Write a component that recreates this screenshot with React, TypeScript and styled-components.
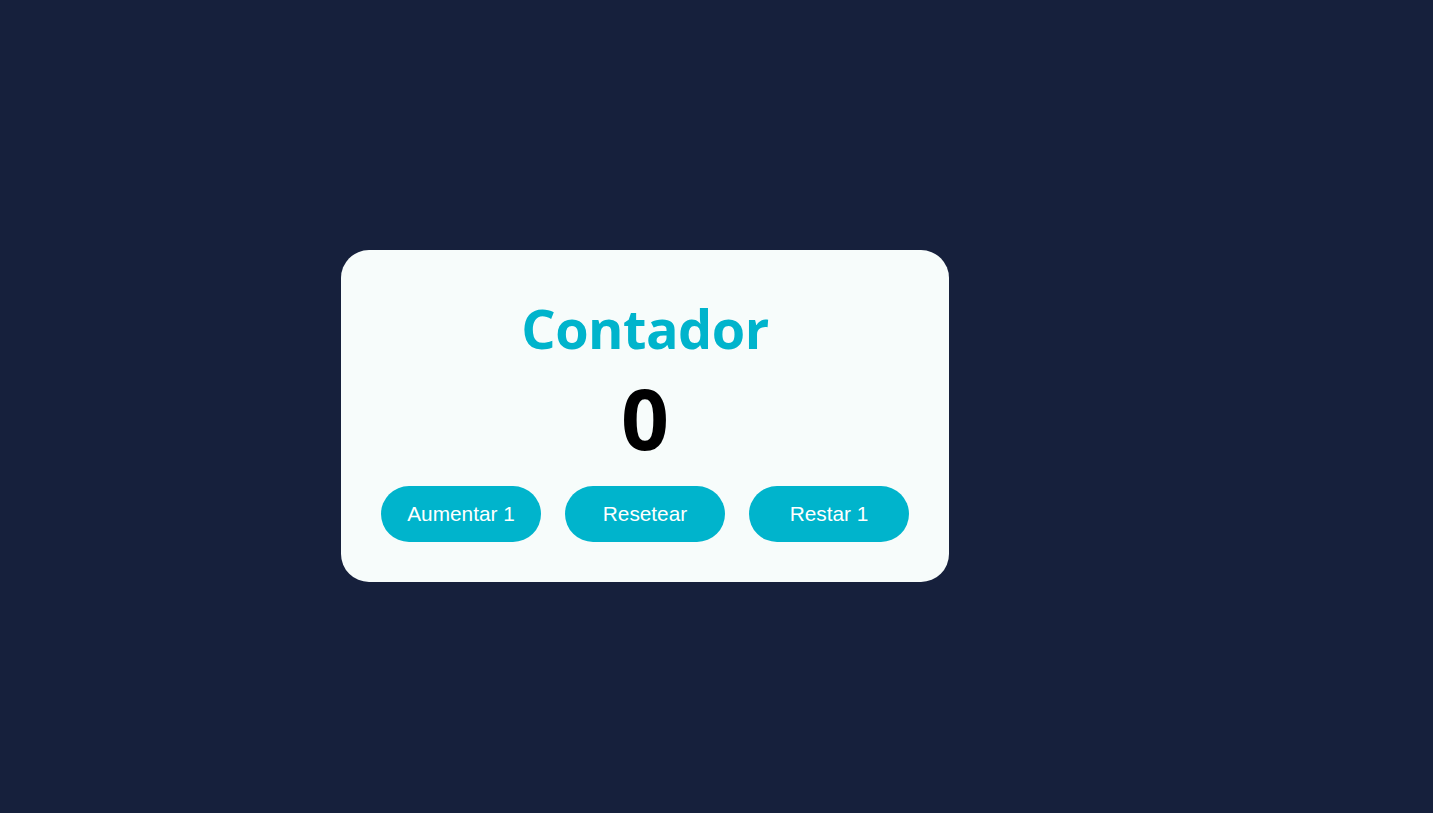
import React, { useState } from "react";
import styled, { createGlobalStyle } from "styled-components";

const GlobalStyle = createGlobalStyle`
  html, body {
    margin: 0;
    padding: 0;
    background: #16203c;
  }
  * { box-sizing: border-box; }
`;

const Page = styled.main`
  min-height: 813px;
  display: flex;
  align-items: flex-start;
  padding: 250px 0 0 341px;
  background: #16203c;
`;

const Card = styled.section`
  width: 608px;
  height: 332px;
  background: #f7fcfb;
  border-radius: 28px;
  padding: 40px;
  display: flex;
  flex-direction: column;
  align-items: center;
`;

const Title = styled.h1`
  margin: 0;
  font-family: "Open Sans", "Noto Sans", sans-serif;
  font-weight: 700;
  font-size: 54px;
  line-height: 76px;
  color: #00b4cc;
  letter-spacing: -0.5px;
`;

const Count = styled.div`
  font-family: "Open Sans", "Noto Sans", sans-serif;
  font-weight: 700;
  font-size: 84px;
  line-height: 110px;
  color: #000;
  margin-top: -3px;
`;

const Buttons = styled.div`
  display: flex;
  gap: 24px;
  margin-top: auto;
`;

const Button = styled.button`
  width: 160px;
  height: 56px;
  border: none;
  border-radius: 28px;
  background: #00b4cc;
  color: #fff;
  font-family: "Liberation Sans", Arial, sans-serif;
  font-size: 20.8px;
  cursor: pointer;
`;

export default function App() {
  const [count, setCount] = useState(0);
  return (
    <>
      <GlobalStyle />
      <Page>
        <Card>
          <Title>Contador</Title>
          <Count>{count}</Count>
          <Buttons>
            <Button onClick={() => setCount((c) => c + 1)}>Aumentar 1</Button>
            <Button onClick={() => setCount(0)}>Resetear</Button>
            <Button onClick={() => setCount((c) => c - 1)}>Restar 1</Button>
          </Buttons>
        </Card>
      </Page>
    </>
  );
}
